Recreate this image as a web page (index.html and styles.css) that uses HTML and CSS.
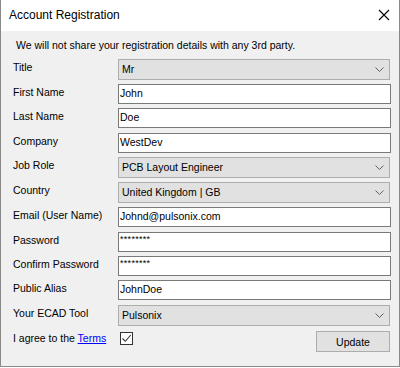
FILE: index.html
```html
<!DOCTYPE html>
<html>
<head>
<meta charset="utf-8">
<link rel="stylesheet" href="styles.css">
</head>
<body>
<div class="window">
  <div class="titlebar">
    <span class="title">Account Registration</span>
    <svg class="close" width="12" height="12" viewBox="0 0 12 12"><path d="M1 1 L11 11 M11 1 L1 11" stroke="#000" stroke-width="1.1" fill="none"/></svg>
  </div>
  <div class="content">
    <div class="intro">We will not share your registration details with any 3rd party.</div>
    <div class="form">
      <div class="row">
        <label class="lbl">Title</label>
        <div class="combo"><span>Mr</span><svg class="chev" width="9" height="5" viewBox="0 0 9 5"><path d="M0.5 0.5 L4.5 4.5 L8.5 0.5" stroke="#606060" fill="none"/></svg></div>
      </div>
      <div class="row r24">
        <label class="lbl">First Name</label>
        <div class="tb">John</div>
      </div>
      <div class="row">
        <label class="lbl">Last Name</label>
        <div class="tb">Doe</div>
      </div>
      <div class="row r24">
        <label class="lbl">Company</label>
        <div class="tb">WestDev</div>
      </div>
      <div class="row">
        <label class="lbl">Job Role</label>
        <div class="combo"><span>PCB Layout Engineer</span><svg class="chev" width="9" height="5" viewBox="0 0 9 5"><path d="M0.5 0.5 L4.5 4.5 L8.5 0.5" stroke="#606060" fill="none"/></svg></div>
      </div>
      <div class="row">
        <label class="lbl">Country</label>
        <div class="combo"><span>United Kingdom | GB</span><svg class="chev" width="9" height="5" viewBox="0 0 9 5"><path d="M0.5 0.5 L4.5 4.5 L8.5 0.5" stroke="#606060" fill="none"/></svg></div>
      </div>
      <div class="row">
        <label class="lbl">Email (User Name)</label>
        <div class="tb">Johnd@pulsonix.com</div>
      </div>
      <div class="row r24">
        <label class="lbl">Password</label>
        <div class="tb pw">********</div>
      </div>
      <div class="row r24">
        <label class="lbl">Confirm Password</label>
        <div class="tb pw">********</div>
      </div>
      <div class="row">
        <label class="lbl">Public Alias</label>
        <div class="tb">JohnDoe</div>
      </div>
      <div class="row">
        <label class="lbl">Your ECAD Tool</label>
        <div class="combo"><span>Pulsonix</span><svg class="chev" width="9" height="5" viewBox="0 0 9 5"><path d="M0.5 0.5 L4.5 4.5 L8.5 0.5" stroke="#606060" fill="none"/></svg></div>
      </div>
      <div class="row last">
        <label class="lbl agree">I agree to the <a class="link" href="#">Terms</a></label>
        <div class="check"><svg width="11" height="11" viewBox="0 0 11 11"><path d="M1.5 5.5 L4.3 8.3 L9.8 2" stroke="#333" stroke-width="1.1" fill="none"/></svg></div>
        <div class="spacer"></div>
        <button class="btn">Update</button>
      </div>
    </div>
  </div>
</div>
</body>
</html>
```

FILE: styles.css
```css
html, body {
  margin: 0;
  padding: 0;
  background: #ffffff;
}
.window {
  width: 400px;
  height: 367px;
  box-sizing: border-box;
  border: 1px solid #8a8a8a;
  border-top: none;
  background: #f0f0f0;
  display: flex;
  flex-direction: column;
  font-family: "Liberation Sans", Arial, sans-serif;
  font-size: 10.5px;
  color: #000;
}
.titlebar {
  height: 31px;
  background: #ffffff;
  display: flex;
  align-items: center;
  justify-content: space-between;
  padding: 0 9px 0 8px;
  flex: none;
}
.title {
  font-size: 12px;
  color: #000;
  padding-bottom: 1px;
}
.close {
  margin-top: -1px;
}
.content {
  padding-top: 8px;
}
.intro {
  padding-left: 15px;
  line-height: 13px;
  height: 13px;
  margin-bottom: 7px;
}
.form {
  display: flex;
  flex-direction: column;
}
.row {
  display: flex;
  align-items: flex-start;
  height: 25px;
}
.row.r24 {
  height: 24px;
}
.lbl {
  width: 117px;
  box-sizing: border-box;
  padding-left: 12px;
  padding-top: 2px;
  line-height: 13px;
  flex: none;
}
.combo {
  width: 272px;
  height: 21px;
  box-sizing: border-box;
  border: 1px solid #adadad;
  background: #e1e1e1;
  display: flex;
  align-items: center;
  justify-content: space-between;
  padding: 0 5px 0 3px;
}
.combo span {
  line-height: 19px;
}
.tb {
  width: 273px;
  height: 20px;
  box-sizing: border-box;
  border: 1px solid #7a7a7a;
  background: #ffffff;
  padding: 0 2px 1px 1px;
  line-height: 17px;
}
.tb.pw {
  font-size: 9px;
  line-height: 10px;
  padding-top: 1px;
  letter-spacing: 0.3px;
}
.row.last {
  height: 30px;
  padding-top: 1px;
  box-sizing: border-box;
}
.agree {
  width: auto;
  padding-right: 0;
  padding-top: 1px;
}
.link {
  color: #0000ff;
  text-decoration: underline;
}
.check {
  width: 13px;
  height: 13px;
  box-sizing: border-box;
  border: 1px solid #333333;
  background: #ffffff;
  margin-left: 14px;
  margin-top: 1px;
  display: flex;
  align-items: center;
  justify-content: center;
}
.spacer {
  flex: 1;
}
.btn {
  width: 74px;
  height: 21px;
  box-sizing: border-box;
  border: 1px solid #adadad;
  background: #e1e1e1;
  font-family: "Liberation Sans", Arial, sans-serif;
  font-size: 10.5px;
  color: #000;
  padding: 0;
  margin-right: 9px;
}
```
